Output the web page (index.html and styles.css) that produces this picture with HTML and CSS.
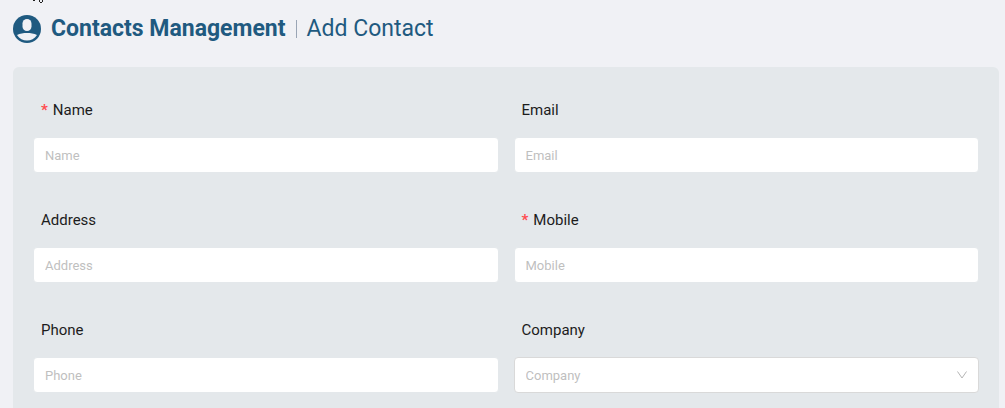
FILE: index.html
```html
<!DOCTYPE html>
<html lang="en">
    <head>
        <meta charset="utf-8">
        <meta name="viewport" content="width=device-width, initial-scale=1">
        <title>Contacts Management</title>
        <link rel="stylesheet" href="styles.css">
    </head>
    <body>
        <svg class="pointer" width="12" height="3" viewBox="0 0 12 3" aria-hidden="true">
            <path d="M1 0h2v1h-2zM7 0h1v2h-1zM10 0h1v2h-1zM8 2h2v1h-2z" fill="#222"/>
        </svg>
        <header class="page-header">
            <svg class="page-icon" viewBox="0 0 28 28" aria-hidden="true">
                <circle cx="14" cy="14" r="14" fill="#1f5a80"/>
                <rect x="9.500" y="4" width="9" height="12" rx="4.500" fill="#f0f1f5"/>
                <path d="M4 20C7 18.500 10.500 18 14 18s7 .5 10 2C21.500 23.800 18 25.500 14 25.500S6.500 23.800 4 20z" fill="#f0f1f5"/>
            </svg>
            <h1 class="page-title">Contacts Management</h1>
            <span class="divider"></span>
            <h2 class="page-subtitle">Add Contact</h2>
        </header>
        <form class="card">
            <div class="form-item">
                <label class="required" for="name">Name</label>
                <input id="name" type="text" placeholder="Name" required>
            </div>
            <div class="form-item">
                <label for="email">Email</label>
                <input id="email" type="email" placeholder="Email">
            </div>
            <div class="form-item">
                <label for="address">Address</label>
                <input id="address" type="text" placeholder="Address">
            </div>
            <div class="form-item">
                <label class="required" for="mobile">Mobile</label>
                <input id="mobile" type="tel" placeholder="Mobile" required>
            </div>
            <div class="form-item">
                <label for="phone">Phone</label>
                <input id="phone" type="tel" placeholder="Phone">
            </div>
            <div class="form-item">
                <label for="company">Company</label>
                <div class="select">
                    <select id="company">
                        <option value="">Company</option>
                    </select>
                    <svg class="arrow" viewBox="0 0 12 12" aria-hidden="true">
                        <path d="M1.500 2.500L6 9l4.500-6.500" fill="none" stroke="#b5b5b5"/>
                    </svg>
                </div>
            </div>
        </form>
    </body>
</html>
```
FILE: styles.css
```css
* {
    box-sizing: border-box;
}
body {
    margin: 0;
    padding: 13px 6px 0 13px;
    background: #f0f1f5;
    color: #1c1c1c;
    font-family: Roboto, "Noto Sans", sans-serif;
    font-size: 15px;
}
.pointer {
    position: absolute;
    top: 0;
    left: 32px;
}
.page-header {
    display: flex;
    align-items: center;
    height: 32px;
    margin-bottom: 22px;
    color: #1f5a80;
}
.page-icon {
    width: 28px;
    height: 28px;
    margin-right: 10px;
}
.page-title, .page-subtitle {
    margin: 0;
    font-size: 23px;
    line-height: 32px;
}
.page-subtitle {
    font-weight: 400;
}
.divider {
    width: 1px;
    height: 18px;
    margin: 0 10px;
    background: #9aa5b5;
}
.card {
    display: grid;
    grid-template-columns: 1fr 1fr;
    gap: 35px 15px;
    padding: 31px 20px;
    border-radius: 6px;
    background: #e4e8eb;
}
.form-item {
    display: flex;
    flex-direction: column;
    gap: 15px;
}
label {
    padding-left: 8px;
    line-height: 24px;
}
.required::before {
    content: "*";
    margin-right: 5px;
    color: #ff4d4f;
    font-weight: 700;
}
input, select {
    width: 100%;
    height: 36px;
    padding: 0 11px;
    border: 1px solid #e4e8eb;
    border-radius: 4px;
    background: #fff;
    color: #bfbfbf;
    font-family: inherit;
    font-size: 13px;
}
input::placeholder {
    color: #bfbfbf;
}
.select {
    position: relative;
}
select {
    display: block;
    appearance: none;
    border-color: #d9d9d9;
}
.arrow {
    position: absolute;
    top: 12px;
    right: 11px;
    width: 12px;
    height: 12px;
    pointer-events: none;
}
```
